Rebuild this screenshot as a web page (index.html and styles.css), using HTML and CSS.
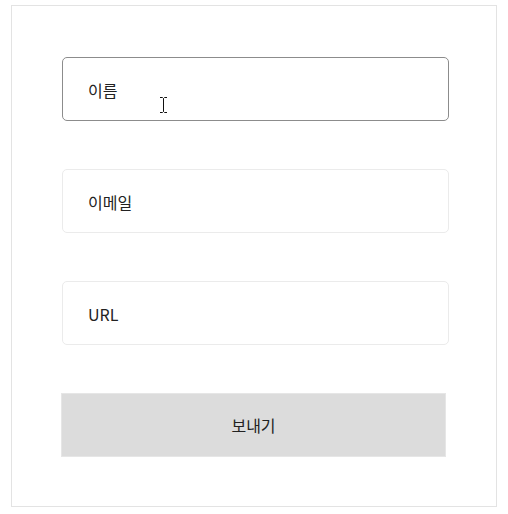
FILE: index.html
```html
<!DOCTYPE html>
<html lang="ko">
<head>
<meta charset="utf-8">
<link rel="stylesheet" href="styles.css">
</head>
<body>
<form class="card">
  <div class="field">
    <input class="input input-hover" type="text" placeholder="이름">
    <svg class="ibeam" width="9" height="16" viewBox="0 0 9 16" aria-hidden="true">
      <path d="M1 0.5h2.5l1 1 1-1H8M1 15.5h2.5l1-1 1 1H8M4.5 1.5v13" fill="none" stroke="#fff" stroke-width="2.2"/>
      <path d="M1 0.5h2.5l1 1 1-1H8M1 15.5h2.5l1-1 1 1H8M4.5 1.5v13" fill="none" stroke="#111" stroke-width="1"/>
    </svg>
  </div>
  <div class="field">
    <input class="input" type="email" placeholder="이메일">
  </div>
  <div class="field">
    <input class="input" type="url" placeholder="URL">
  </div>
  <button class="submit" type="button">보내기</button>
</form>
</body>
</html>
```
FILE: styles.css
```css
html, body {
  margin: 0;
  padding: 0;
  background: #ffffff;
}
body {
  font-family: "Noto Sans CJK KR", "Noto Sans", sans-serif;
  padding: 5px 0 0 11px;
}
.card {
  box-sizing: border-box;
  width: 486px;
  height: 502px;
  margin: 0;
  border: 1px solid #e3e3e3;
  padding: 51px 48px 0 50px;
  display: flex;
  flex-direction: column;
  gap: 48px;
}
.field {
  position: relative;
}
.input {
  box-sizing: border-box;
  display: block;
  width: 387px;
  height: 64px;
  margin: 0;
  border: 1px solid #ebebeb;
  border-radius: 5px;
  padding: 0 25px;
  padding-top: 2px;
  font-family: inherit;
  font-size: 16px;
  color: #222;
  background: #fff;
  outline: none;
}
.input::placeholder {
  color: #222;
  opacity: 1;
}
.input-hover {
  border-color: #8c8c8c;
}
.ibeam {
  position: absolute;
  left: 97px;
  top: 40px;
}
.submit {
  box-sizing: border-box;
  width: 385px;
  height: 64px;
  margin: 0 0 0 -1px;
  border: 1px solid #e6e6e6;
  background: #dcdcdc;
  border-radius: 0;
  font-family: inherit;
  font-size: 16px;
  color: #222;
  padding: 0;
}
```
